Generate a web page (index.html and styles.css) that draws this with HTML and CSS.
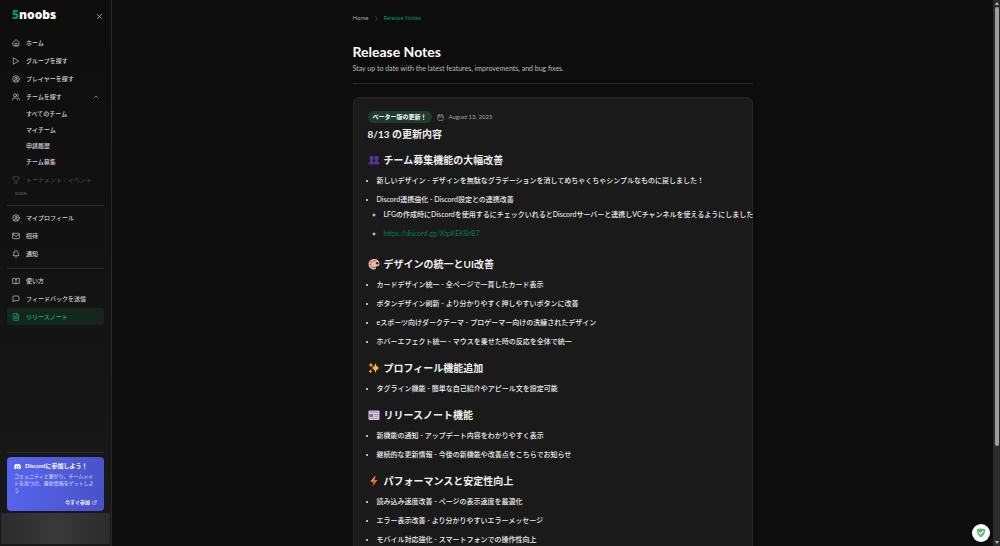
FILE: index.html
```html
<!DOCTYPE html>
<html lang="ja">
<head>
<meta charset="utf-8">
<meta name="viewport" content="width=device-width, initial-scale=1">
<title>Release Notes - 5noobs</title>
<link rel="stylesheet" href="styles.css">
</head>
<body>
<svg class="defs" aria-hidden="true">
  <symbol id="i-user" viewBox="0 0 24 24"><circle cx="12" cy="12" r="10"/><circle cx="12" cy="10" r="3.5"/><path d="M6.5 19.5v-1a3 3 0 0 1 3-3h5a3 3 0 0 1 3 3v1"/></symbol>
</svg>
<div class="app">
  <aside class="sidebar">
    <header class="brand">
      <a class="logo" href="#"><span class="logo-five">5</span>noobs</a>
      <button class="close" type="button" aria-label="閉じる"><svg class="icon" viewBox="0 0 24 24"><path d="M5 5l14 14M19 5L5 19"/></svg></button>
    </header>
    <nav class="nav">
      <a class="nav-item" href="#"><svg class="icon" viewBox="0 0 24 24"><path d="M15 21v-8H9v8M3 10l9-8 9 8v9a2 2 0 0 1-2 2H5a2 2 0 0 1-2-2z"/></svg>ホーム</a>
      <a class="nav-item" href="#"><svg class="icon" viewBox="0 0 24 24"><path d="M5 3l15 9-15 9z"/></svg>グループを探す</a>
      <a class="nav-item" href="#"><svg class="icon"><use href="#i-user"/></svg>プレイヤーを探す</a>
      <button class="nav-item" type="button" aria-expanded="true"><svg class="icon" viewBox="0 0 24 24"><circle cx="9" cy="7" r="4.5"/><path d="M1.500 21v-2a5 5 0 0 1 5-4h5a5 5 0 0 1 5 4v2M16 3a4.500 4.500 0 0 1 0 8.500M19 15a5 5 0 0 1 3.500 4v2"/></svg>チームを探す<svg class="icon chevron" viewBox="0 0 24 24"><path d="M4 16l8-8 8 8"/></svg></button>
      <div class="subnav">
        <a href="#">すべてのチーム</a>
        <a href="#">マイチーム</a>
        <a href="#">申請履歴</a>
        <a href="#">チーム募集</a>
      </div>
      <div class="nav-item disabled"><svg class="icon" viewBox="0 0 24 24"><path d="M6 2h12v8a6 6 0 0 1-12 0zM6 9H4a2.500 2.500 0 0 1 0-5h2M18 9h2a2.500 2.500 0 0 0 0-5h-2M10 15v3l-3 4h10l-3-4v-3"/></svg>トーナメント / イベント</div>
      <span class="soon">SOON</span>
    </nav>
    <nav class="nav group">
      <a class="nav-item" href="#"><svg class="icon"><use href="#i-user"/></svg>マイプロフィール</a>
      <a class="nav-item" href="#"><svg class="icon" viewBox="0 0 24 24"><rect x="2" y="4" width="20" height="16" rx="2"/><path d="M2 7l10 6.500L22 7"/></svg>招待</a>
      <a class="nav-item" href="#"><svg class="icon" viewBox="0 0 24 24"><path d="M6 8a6 6 0 0 1 12 0c0 6 3 7 3 9H3c0-2 3-3 3-9M10 21h4"/></svg>通知</a>
    </nav>
    <nav class="nav group">
      <a class="nav-item" href="#"><svg class="icon" viewBox="0 0 24 24"><path d="M12 7v14M12 7a4 4 0 0 0-4-3H2v15h7a3 3 0 0 1 3 2 3 3 0 0 1 3-2h7V4h-6a4 4 0 0 0-4 3z"/></svg>使い方</a>
      <a class="nav-item" href="#"><svg class="icon" viewBox="0 0 24 24"><path d="M21 15a2 2 0 0 1-2 2H7l-4 4V5a2 2 0 0 1 2-2h14a2 2 0 0 1 2 2z"/></svg>フィードバックを送信</a>
      <a class="nav-item active" href="#" aria-current="page"><svg class="icon" viewBox="0 0 24 24"><path d="M15 2H6a2 2 0 0 0-2 2v16a2 2 0 0 0 2 2h12a2 2 0 0 0 2-2V7zM14 2v6h6M8 9h2M8 13h8M8 17h8"/></svg>リリースノート</a>
    </nav>
    <footer class="side-foot">
      <section class="discord">
        <h2 class="discord-title"><svg class="discord-logo" viewBox="0 0 24 24"><path fill="#fff" fill-rule="evenodd" d="M20.300 4.400A19.800 19.800 0 0 0 15.400 2.900l-.6 1.300a18 18 0 0 0-5.500 0l-.7-1.300a19.700 19.700 0 0 0-4.900 1.500C.5 9.100-.3 13.600.1 18.100a20 20 0 0 0 6 3l1.300-2.100-1.900-.9.400-.3a14.300 14.300 0 0 0 12.200 0l.4.300-1.900.9 1.300 2.100a19.900 19.900 0 0 0 6-3c.5-5.200-.8-9.700-3.600-13.700zM8 15.300c-1.200 0-2.200-1.100-2.200-2.400S6.800 10.500 8 10.500s2.200 1.100 2.200 2.400S9.200 15.300 8 15.300zm8 0c-1.200 0-2.200-1.100-2.200-2.400s1-2.400 2.200-2.400 2.200 1.100 2.200 2.400-1 2.400-2.200 2.400z"/></svg>Discordに参加しよう！</h2>
        <p class="discord-text">コミュニティと繋がり、チームメイトを見つけ、最新情報をゲットしよう</p>
        <a class="discord-link" href="#">今すぐ参加<svg class="icon" viewBox="0 0 24 24"><path d="M14 3h7v7M21 3L10 14M18 13v6a2 2 0 0 1-2 2H5a2 2 0 0 1-2-2V8a2 2 0 0 1 2-2h6"/></svg></a>
      </section>
      <div class="account"></div>
    </footer>
  </aside>

  <main class="main">
    <div class="content">
      <nav class="crumbs" aria-label="パンくず">
        <a href="#">Home</a>
        <svg class="icon" viewBox="0 0 24 24"><path d="M9 5l7 7-7 7"/></svg>
        <a class="current" href="#" aria-current="page">Release Notes</a>
      </nav>
      <header class="page-head">
        <h1>Release Notes</h1>
        <p>Stay up to date with the latest features, improvements, and bug fixes.</p>
      </header>
      <article class="card">
        <div class="meta">
          <span class="badge">ベーター版の更新！</span>
          <svg class="icon" viewBox="0 0 24 24"><rect x="3" y="4" width="18" height="18" rx="2"/><path d="M3 10h18M8 1v5M16 1v5"/></svg>
          <time datetime="2025-08-13">August 13, 2025</time>
        </div>
        <h2 class="card-title">8/13 の更新内容</h2>
        <section class="notes">
          <h3><svg class="emoji" viewBox="0 0 24 24"><g fill="#553394"><circle cx="7" cy="8" r="4.500"/><circle cx="17" cy="8" r="4.500"/><path d="M4.500 10h5v5h-5zM14.500 10h5v5h-5zM1 21c0-5 2-7 6-7 2.500 0 4 .8 5 2 1-1.200 2.500-2 5-2 4 0 6 2 6 7z"/></g><path d="M12 16v5" stroke="#372063"/></svg>チーム募集機能の大幅改善</h3>
          <ul>
            <li>新しいデザイン - デザインを無駄なグラデーションを消してめちゃくちゃシンプルなものに戻しました！</li>
            <li>Discord連携強化 - Discord設定との連携改善
              <ul>
                <li>LFGの作成時にDiscordを使用するにチェックいれるとDiscordサーバーと連携しVCチャンネルを使えるようにしました</li>
                <li><a class="link" href="#">https://discord.gg/XtpKEKBrB7</a></li>
              </ul>
            </li>
          </ul>
        </section>
        <section class="notes">
          <h3><svg class="emoji" viewBox="0 0 24 24"><path fill="#f5b69c" d="M12 2C5 2 1 7 1 12.500S5 23 12 23c3 0 4-1 3.500-3-.6-2 .5-3.500 3-3.500 3 0 4.500-1.500 4.500-5C23 6 18 2 12 2z"/><circle cx="18.500" cy="10.500" r="2.600" fill="#302523"/><circle cx="13" cy="5.500" r="2.200" fill="#b84be0"/><circle cx="7" cy="7.500" r="2.200" fill="#e0458a"/><circle cx="4.800" cy="13" r="2.100" fill="#eb4550"/><circle cx="7.500" cy="18" r="2.100" fill="#36bf88"/><circle cx="12.500" cy="19" r="2.200" fill="#279cf5"/></svg>デザインの統一とUI改善</h3>
          <ul>
            <li>カードデザイン統一 - 全ページで一貫したカード表示</li>
            <li>ボタンデザイン刷新 - より分かりやすく押しやすいボタンに改善</li>
            <li>eスポーツ向けダークテーマ - プロゲーマー向けの洗練されたデザイン</li>
            <li>ホバーエフェクト統一 - マウスを乗せた時の反応を全体で統一</li>
          </ul>
        </section>
        <section class="notes">
          <h3><svg class="emoji" viewBox="0 0 24 24"><path fill="#fbb83f" d="M15 2q1.500 8 8 10-6.500 2-8 10-1.500-8-8-10 6.500-2 8-10z"/><path fill="#f59a3a" d="M6 1q.8 4 5 5-4.200 1-5 5-.8-4-5-5 4.200-1 5-5zM5 14q.7 4 4 4.500-3.300.5-4 4.500-.7-4-4-4.500 3.300-.5 4-4.500z"/></svg>プロフィール機能追加</h3>
          <ul>
            <li>タグライン機能 - 簡単な自己紹介やアピール文を設定可能</li>
          </ul>
        </section>
        <section class="notes">
          <h3><svg class="emoji" viewBox="0 0 24 24"><rect x="1" y="3" width="22" height="19" rx="2" fill="#d9cbe4"/><path fill="#9483a9" d="M3 5h18v2H3zM12 10h9v1.500h-9zM12 13.500h9V15h-9zM3 18h18v1.500H3z"/><path fill="#7b6692" d="M3 10h7v6H3z"/></svg>リリースノート機能</h3>
          <ul>
            <li>新機能の通知 - アップデート内容をわかりやすく表示</li>
            <li>継続的な更新情報 - 今後の新機能や改善点をこちらでお知らせ</li>
          </ul>
        </section>
        <section class="notes">
          <h3><svg class="emoji" viewBox="0 0 24 24"><path fill="#f9662f" d="M15 1L5 13.500h6L9 23l10-13h-6z"/><path fill="#ffa23f" d="M15 1L5 13.500h3.500L14 5z"/></svg>パフォーマンスと安定性向上</h3>
          <ul>
            <li>読み込み速度改善 - ページの表示速度を最適化</li>
            <li>エラー表示改善 - より分かりやすいエラーメッセージ</li>
            <li>モバイル対応強化 - スマートフォンでの操作性向上</li>
          </ul>
        </section>
      </article>
    </div>
  </main>

  <div class="scrollbar" aria-hidden="true">
    <span class="arrow up"></span>
    <span class="thumb"></span>
    <span class="arrow down"></span>
  </div>
</div>
<button class="shield" type="button" aria-label="AdGuard"><svg viewBox="0 0 24 24"><path fill="#63b87a" d="M12 1C9 1 5 2 2 3c0 8 2 15 10 20C20 18 22 11 22 3c-3-1-7-2-10-2z"/><path fill="none" stroke="#fff" stroke-width="2.600" d="M7 10l4 4.500L18 7"/></svg></button>
</body>
</html>
```

FILE: styles.css
```css
* {
  box-sizing: border-box;
  margin: 0;
  padding: 0;
}

body {
  background: #0d0d0d;
  color: #ededed;
  font-family: Lato, "Noto Sans CJK JP", sans-serif;
  font-size: 7px;
  line-height: 12px;
}

a {
  color: inherit;
  text-decoration: none;
}

button {
  border: 0;
  background: none;
  color: inherit;
  font: inherit;
  cursor: pointer;
}

.defs {
  display: none;
}

.icon {
  flex: none;
  width: 8px;
  height: 8px;
  fill: none;
  stroke: currentColor;
  stroke-width: 2;
  stroke-linecap: round;
  stroke-linejoin: round;
}

.app {
  display: grid;
  grid-template-columns: 112px 1fr 7px;
  height: 100vh;
}

/* Sidebar */
.sidebar {
  display: flex;
  flex-direction: column;
  min-height: 0;
  border-right: 1px solid #292929;
  background: linear-gradient(#0d0d0d, #191919);
}

.brand {
  display: flex;
  align-items: center;
  justify-content: space-between;
  height: 34px;
  padding: 0 8px 5px 12px;
}

.logo {
  color: #fff;
  font-family: "Open Sans", sans-serif;
  font-size: 12px;
  font-weight: 800;
}

.logo-five {
  color: #079463;
}

.close {
  display: flex;
  padding: 3px 0 0;
}

.close .icon {
  width: 7px;
  height: 7px;
}

.nav {
  display: flex;
  flex-direction: column;
  gap: 1px;
  padding: 0 7px;
}

.nav-item {
  display: flex;
  align-items: center;
  gap: 6px;
  height: 17px;
  padding: 0 5px;
  border-radius: 3px;
  color: #d2d2d2;
  font-size: 6px;
  font-weight: 500;
  white-space: nowrap;
}

.chevron {
  width: 6px;
  height: 6px;
  margin-left: auto;
}

.subnav {
  display: flex;
  flex-direction: column;
  padding-left: 19px;
  color: #d2d2d2;
  font-size: 6px;
  font-weight: 500;
  line-height: 16px;
}

.disabled {
  color: #454545;
}

.soon {
  padding-left: 8px;
  color: #777;
  font-size: 4px;
  line-height: 10px;
}

.group {
  margin: 5px 7px 0;
  padding: 3px 0 0;
  border-top: 1px solid #2d2d2d;
}

.nav + .group {
  margin-top: 6px;
}

.nav-item.active {
  background: #13271f;
  color: #0fb873;
}

.nav-item.disabled {
  color: #454545;
}

.side-foot {
  display: flex;
  flex-direction: column;
  gap: 2px;
  margin-top: auto;
  padding: 0 1px 2px;
}

.discord {
  display: flex;
  flex-direction: column;
  margin: 0 6px;
  padding: 3px 7px;
  border-radius: 4px;
  background: linear-gradient(100deg, #5865f2, #4752c4);
  color: #fff;
}

.side-foot::before {
  height: 1px;
  margin: 0 6px 2px;
  background: #2d2d2d;
  content: "";
}

.discord-title {
  display: flex;
  align-items: center;
  gap: 4px;
  font-size: 6px;
  font-weight: 700;
  white-space: nowrap;
}

.discord-logo {
  width: 7px;
  height: 7px;
}

.discord-text {
  margin-top: 1px;
  font-size: 5px;
  line-height: 7px;
  color: #dfe2ff;
}

.discord-link {
  display: flex;
  align-items: center;
  align-self: flex-end;
  gap: 2px;
  margin-top: 2px;
  font-size: 5px;
  font-weight: 700;
}

.discord-link .icon {
  width: 5px;
  height: 5px;
}

.account {
  height: 31px;
  background: linear-gradient(90deg, #2b2b2b, #393939 50%, #2b2b2b);
}

/* Main column */
.main {
  min-width: 0;
  overflow: hidden;
}

.content {
  max-width: 400px;
  margin: 0 auto;
  padding-top: 12px;
}

.crumbs {
  display: flex;
  align-items: center;
  gap: 4px;
  color: #a5a5a5;
  font-size: 6px;
}

.crumbs .icon {
  width: 7px;
  height: 7px;
  color: #666;
}

.current {
  color: #079463;
}

.page-head {
  padding: 19px 0 9px;
  border-bottom: 1px solid #292929;
}

.page-head h1 {
  color: #fff;
  font-size: 14px;
  line-height: 18px;
}

.page-head p {
  padding-top: 1px;
  color: #bdbdbd;
}

.card {
  margin-top: 13px;
  padding: 13px 0 14px 14px;
  border: 1px solid #262626;
  border-radius: 6px;
  background: #1a1a1a;
}

.meta {
  display: flex;
  align-items: center;
  gap: 5px;
  color: #a5a5a5;
  font-size: 6px;
}

.meta .icon {
  width: 7px;
  height: 7px;
}

.badge {
  padding: 0 5px;
  border-radius: 6px;
  background: #1f3c31;
  color: #fff;
  font-weight: 700;
}

.card-title {
  margin-top: 4px;
  font-size: 10px;
  line-height: 14px;
}

.notes {
  margin-top: 12px;
}

.notes + .notes {
  margin-top: 14px;
}

.notes h3 {
  display: flex;
  align-items: center;
  gap: 4px;
  margin-bottom: 7px;
  font-size: 10px;
  line-height: 14px;
}

.emoji {
  width: 12px;
  height: 12px;
}

.notes ul {
  display: flex;
  flex-direction: column;
  gap: 7px;
  padding-left: 9px;
  font-weight: 500;
}

.notes li ul {
  margin-top: 3px;
  padding-bottom: 4px;
  padding-left: 7px;
  list-style-type: circle;
  white-space: nowrap;
}

.link {
  color: #08724d;
}

/* Scroll track */
.scrollbar {
  display: flex;
  flex-direction: column;
  align-items: center;
  gap: 2px;
  padding: 2px 0;
  background: #2b2b2b;
}

.thumb {
  width: 4px;
  height: 81%;
  border-radius: 2px;
  background: #9f9f9f;
}

.arrow {
  border: 2px solid transparent;
}

.up {
  border-top: 0;
  border-bottom: 3px solid #bbb;
}

.down {
  margin-top: auto;
  border-bottom: 0;
  border-top: 3px solid #bbb;
}

/* Floating badge above the page */
.shield {
  position: fixed;
  right: 10px;
  bottom: 4px;
  display: flex;
  align-items: center;
  justify-content: center;
  width: 18px;
  height: 18px;
  border-radius: 50%;
  background: #fff;
}

.shield svg {
  width: 10px;
  height: 10px;
}
```
